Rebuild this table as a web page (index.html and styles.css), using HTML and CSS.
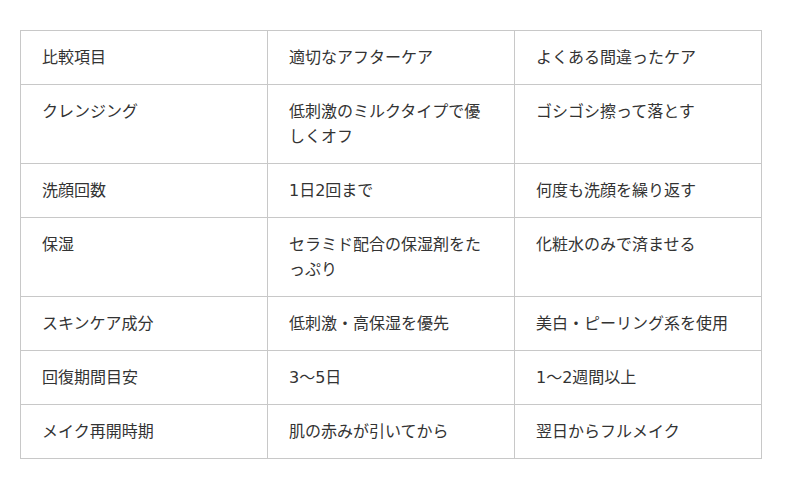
FILE: index.html
```html
<!DOCTYPE html>
<html lang="ja">
<head>
<meta charset="utf-8">
<link rel="stylesheet" href="styles.css">
</head>
<body>
<table class="compare">
  <tr><td>比較項目</td><td>適切なアフターケア</td><td>よくある間違ったケア</td></tr>
  <tr><td>クレンジング</td><td>低刺激のミルクタイプで優しくオフ</td><td>ゴシゴシ擦って落とす</td></tr>
  <tr><td>洗顔回数</td><td>1日2回まで</td><td>何度も洗顔を繰り返す</td></tr>
  <tr><td>保湿</td><td>セラミド配合の保湿剤をたっぷり</td><td>化粧水のみで済ませる</td></tr>
  <tr><td>スキンケア成分</td><td>低刺激・高保湿を優先</td><td>美白・ピーリング系を使用</td></tr>
  <tr><td>回復期間目安</td><td>3〜5日</td><td>1〜2週間以上</td></tr>
  <tr><td>メイク再開時期</td><td>肌の赤みが引いてから</td><td>翌日からフルメイク</td></tr>
</table>
</body>
</html>
```
FILE: styles.css
```css
html, body {
  margin: 0;
  padding: 0;
  background: #fff;
}
body {
  padding: 30px 20px;
  font-family: "DejaVu Sans", "Noto Sans CJK JP", sans-serif;
  color: #333;
}
.compare {
  width: 742px;
  border-collapse: collapse;
  table-layout: fixed;
  font-size: 16px;
}
.compare td {
  border: 1px solid #c8c8c8;
  padding: 14px 21px;
  line-height: 25px;
  vertical-align: top;
  text-align: left;
}
```
